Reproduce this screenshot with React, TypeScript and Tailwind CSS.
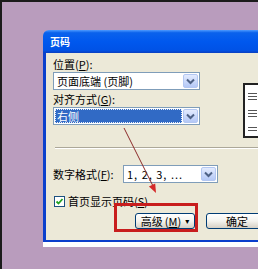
import React from 'react';

const FONT = { fontFamily: '"Noto Sans CJK SC", "DejaVu Sans", sans-serif' };

function Mn({ k }: { k: string }) {
  return (
    <span>
      (<span className="underline">{k}</span>)
    </span>
  );
}

function ChevronBtn() {
  return (
    <div className="flex w-[15px] items-center justify-center rounded-[2px] border border-[#b3c7f2] bg-gradient-to-b from-[#e3ebfe] to-[#b4c8f6]">
      <svg width="9" height="7" viewBox="0 0 9 7">
        <path d="M1 1.5 L4.5 5 L8 1.5" fill="none" stroke="#4d6185" strokeWidth="2" />
      </svg>
    </div>
  );
}

function Combo({
  children,
  selected,
  className,
}: {
  children: React.ReactNode;
  selected?: boolean;
  className?: string;
}) {
  return (
    <div className={`flex h-[18px] border border-[#7f9db9] bg-white p-[1px] ${className ?? ''}`}>
      <div
        className={`mr-[1px] flex flex-1 items-center pl-[2px] leading-none ${
          selected ? 'bg-[#316ac5] text-white outline-1 outline-dotted outline-[#e8eefa] -outline-offset-1' : ''
        }`}
      >
        {children}
      </div>
      <ChevronBtn />
    </div>
  );
}

function XpButton({ children, className }: { children: React.ReactNode; className?: string }) {
  return (
    <div
      className={`flex h-[16px] items-center justify-center rounded-[3px] border border-[#003c74] bg-gradient-to-b from-[#ffffff] via-[#f4f3ee] to-[#d6d0c5] leading-none ${className ?? ''}`}
    >
      {children}
    </div>
  );
}

export default function App() {
  return (
    <div
      className="relative h-[269px] w-[258px] overflow-hidden border-l-2 border-t-2 border-[#1b1b1b] bg-[#b99cbd] text-[11px] text-black"
      style={FONT}
    >
      <div className="ml-[41px] mt-[28px] w-[240px]">
        {/* title bar */}
        <div className="flex h-[23px] items-center rounded-tl-[6px] bg-[linear-gradient(to_bottom,#4e9bff_0%,#0a62ec_12%,#0058ee_50%,#0052e6_88%,#0a3fc0_100%)] pl-[7px] text-[10px] font-bold text-white">
          页码
        </div>

        {/* body */}
        <div className="border-b-2 border-l-[3px] border-[#0b3fcc] bg-[#ece9d8] pb-[11px] pl-[7px] pt-[4px]">
          <div className="flex">
            <div className="flex w-[152px] flex-col">
              <div className="h-[15px] leading-[15px]">
                位置<Mn k="P" />:
              </div>
              <Combo>页面底端 (页脚)</Combo>
              <div className="mt-[2px] h-[15px] leading-[15px]">
                对齐方式<Mn k="G" />:
              </div>
              <Combo selected>右侧</Combo>
            </div>
            <div className="ml-[43px] mt-[26px] h-[55px] w-[40px] border-2 border-[#222] bg-white">
              <svg width="36" height="51" viewBox="0 0 36 51">
                <g stroke="#555" strokeWidth="1">
                  <path d="M3 8.5 H12 M3 11.5 H12 M3 14.5 H12" />
                  <path d="M3 25.5 H12 M3 28.5 H12 M3 31.5 H12" />
                  <path d="M3 42.5 H12 M3 45.5 H12" />
                </g>
              </svg>
            </div>
          </div>

          <div className="ml-[2px] mt-[9px] h-[1px] bg-[#aca899]" />
          <div className="ml-[2px] h-[1px] bg-white" />

          <div className="mt-[16px] flex items-center">
            <div className="w-[70px]">
              数字格式<Mn k="F" />:
            </div>
            <Combo className="w-[95px]">
              <span className="tracking-[1px]">1, 2, 3, ...</span>
            </Combo>
          </div>

          <div className="mt-[12px] flex h-[12px] items-center">
            <div className="ml-[1px] flex h-[11px] w-[11px] items-center justify-center border border-[#1c5180] bg-white">
              <svg width="9" height="9" viewBox="0 0 9 9">
                <path d="M1.5 4.5 L3.5 6.5 L7.5 2" fill="none" stroke="#21a121" strokeWidth="1.8" />
              </svg>
            </div>
            <div className="ml-[3px] leading-none">
              首页显示页码<Mn k="S" />
            </div>
          </div>

          <div className="mt-[6px] flex">
            <XpButton className="ml-[82px] w-[60px]">
              高级<span className="ml-[2px]">(<span className="underline">M</span>)</span>
              <span className="ml-[4px] text-[8px]">▾</span>
            </XpButton>
            <XpButton className="ml-[11px] w-[62px]">确定</XpButton>
          </div>
        </div>
        <div className="h-[5px] bg-white" />
      </div>

      {/* annotations */}
      <div className="pointer-events-none absolute left-[112px] top-[201px] h-[29px] w-[84px] border-[3px] border-[#c81d1d]" />
      <svg className="pointer-events-none absolute left-[-2px] top-[-2px]" width="258" height="269">
        <line x1="124" y1="128" x2="153" y2="186" stroke="#8c2b2b" strokeWidth="1" />
        <polygon points="156,193 155.2,183.4 148.9,186.4" fill="#d42a2a" />
      </svg>
    </div>
  );
}
